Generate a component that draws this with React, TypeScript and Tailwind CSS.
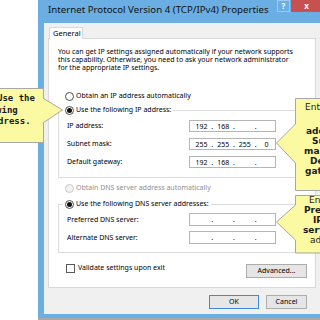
import React from "react";

function Radio({ checked, disabled }: { checked?: boolean; disabled?: boolean }) {
  return (
    <span
      className={
        disabled
          ? "inline-flex w-[9px] h-[9px] shrink-0 rounded-full border border-[#c9c9c9] bg-[#f2f2f2] items-center justify-center"
          : "inline-flex w-[9px] h-[9px] shrink-0 rounded-full border border-[#4d4d4d] bg-white items-center justify-center"
      }
    >
      {checked && <span className="w-[5px] h-[5px] rounded-full bg-[#111]" />}
    </span>
  );
}

function IpField({ v }: { v: string[] }) {
  return (
    <div className="w-[87px] h-full border border-[#b5b5b5] bg-white flex items-center pl-[3px] text-[7px] leading-none text-black">
      {v.map((s, i) => (
        <React.Fragment key={i}>
          <span className="w-[17px] text-center">{s}</span>
          {i < 3 && <span className="w-[5px] text-center">.</span>}
        </React.Fragment>
      ))}
    </div>
  );
}

function Row({ label, v, h }: { label: string; v: string[]; h: string }) {
  return (
    <div className={`flex items-center ${h}`}>
      <span className="w-[130px] pl-[8px]">{label}</span>
      <IpField v={v} />
    </div>
  );
}

export default function App() {
  return (
    <div className="relative w-[320px] h-[320px] overflow-hidden bg-white font-['Noto_Sans',sans-serif] text-black">
      {/* window */}
      <div className="ml-[38px] w-[292px] h-[318px] bg-[#6aaee4] flex flex-col">
        {/* title bar */}
        <div className="h-[23px] flex items-start shrink-0">
          <div className="flex-1 pl-[10px] pt-[3px] text-[9.7px] leading-[13px] text-[#111] whitespace-nowrap">
            Internet Protocol Version 4 (TCP/IPv4) Properties
          </div>
          <div className="w-[13px] h-[12px] mr-[1px] border border-[#9cc9ee] bg-[#6aaee4] flex items-center justify-center text-[8px] font-bold text-white leading-none">
            ?
          </div>
          <div className="w-[31px] h-[12px] mr-[8px] bg-[#c75050] flex items-center justify-center text-[8px] font-bold text-white leading-none">
            x
          </div>
        </div>
        {/* client */}
        <div className="mx-[6px] mb-[4px] flex-1 bg-[#f0f0f0] flex flex-col text-[7px] leading-[8px]">
          <div className="pt-[4px] pl-[5px] flex">
            <div className="relative z-10 w-[34px] h-[12px] -mb-[1px] bg-white border border-b-0 border-[#d9d9d9] pl-[3px] text-[7.5px] leading-[11px]">
              General
            </div>
          </div>
          <div className="ml-[4px] w-[268px] h-[250px] bg-white border border-[#d9d9d9] pl-[9px] pr-[8px] flex flex-col">
            <p className="pt-[9px] whitespace-nowrap">
              You can get IP settings assigned automatically if your network supports
              <br />
              this capability. Otherwise, you need to ask your network administrator
              <br />
              for the appropriate IP settings.
            </p>
            <div className="mt-[19px] h-[10px] flex items-center gap-[2px] pl-[7px]">
              <Radio />
              <span>Obtain an IP address automatically</span>
            </div>
            {/* IP group */}
            <div className="mt-[9px] h-[68px] border border-[#dcdcdc] flex flex-col">
              <div className="-mt-[6px] ml-[4px] h-[10px] self-start px-[2px] bg-white flex items-center gap-[2px]">
                <Radio checked />
                <span>Use the following IP address:</span>
              </div>
              <div className="mt-[5px] flex flex-col gap-[6px]">
                <Row label="IP address:" v={["192", "168", "", ""]} h="h-[12px]" />
                <Row label="Subnet mask:" v={["255", "255", "255", "0"]} h="h-[12px]" />
                <Row label="Default gateway:" v={["192", "168", "", ""]} h="h-[12px]" />
              </div>
            </div>
            <div className="mt-[5px] h-[10px] flex items-center gap-[2px] pl-[7px] text-[#8f8f8f]">
              <Radio disabled />
              <span>Obtain DNS server address automatically</span>
            </div>
            {/* DNS group */}
            <div className="mt-[11px] h-[49px] border border-[#dcdcdc] flex flex-col">
              <div className="-mt-[6px] ml-[4px] h-[10px] self-start px-[2px] bg-white flex items-center gap-[2px]">
                <Radio checked />
                <span>Use the following DNS server addresses:</span>
              </div>
              <div className="mt-[4px] flex flex-col gap-[5px]">
                <Row label="Preferred DNS server:" v={["", "", "", ""]} h="h-[13px]" />
                <Row label="Alternate DNS server:" v={["", "", "", ""]} h="h-[13px]" />
              </div>
            </div>
            <div className="mt-[10px] flex items-start justify-between">
              <div className="h-[10px] flex items-center gap-[3px] pl-[8px]">
                <span className="w-[9px] h-[9px] border border-[#5a5a5a] bg-white" />
                <span>Validate settings upon exit</span>
              </div>
              <div className="mt-[1px] w-[61px] h-[14px] border border-[#acacac] bg-[#e5e5e5] flex items-center justify-center">
                Advanced...
              </div>
            </div>
          </div>
          <div className="mt-[7px] flex justify-end gap-[7px] pr-[17px]">
            <div className="w-[50px] h-[14px] border border-[#3c8ad8] bg-[#e6e6e6] flex items-center justify-center">
              OK
            </div>
            <div className="w-[41px] h-[14px] border border-[#acacac] bg-[#e5e5e5] flex items-center justify-center">
              Cancel
            </div>
          </div>
        </div>
      </div>
      <div className="ml-[38px] h-[2px] bg-[#a9a9a9]" />

      {/* left callout */}
      <div className="absolute left-[-12px] top-[88px] w-[80px] h-[56px]">
        <svg className="absolute left-0 top-0" width="80" height="56" viewBox="0 0 80 56">
          <path
            d="M0.5 0.5 H55.5 V10.5 L74.5 22 L55.5 34.5 V54.5 H0.5 Z"
            fill="#fbfaa2"
            stroke="#a7a7a7"
            strokeWidth="1"
          />
        </svg>
        <div className="relative pt-[5px] font-['DejaVu_Sans_Mono',monospace] font-bold text-[9px] leading-[11.5px] text-[#1a1a1a] whitespace-nowrap">
          <div className="ml-[9px]">Use the</div>
          <div className="ml-[-19px]">following</div>
          <div className="ml-[-17px]">IP address.</div>
        </div>
      </div>

      {/* right callout 1 */}
      <div className="absolute left-[275px] top-[98px] w-[70px] h-[93px]">
        <svg className="absolute left-0 top-0" width="70" height="93" viewBox="0 0 70 93">
          <path
            d="M20.5 0.5 H69 V92.5 H20.5 V65 L1.5 45 L20.5 26 Z"
            fill="#fbfaa2"
            stroke="#a7a7a7"
            strokeWidth="1"
          />
        </svg>
        <div className="relative pt-[4px] font-['DejaVu_Sans',sans-serif] text-[9px] leading-[10px] text-[#1a1a1a] whitespace-nowrap">
          <div className="ml-[30px]">Enter the</div>
          <div className="ml-[50px] font-bold">IP</div>
          <div className="ml-[31px] mt-[4px] font-bold">address,</div>
          <div className="ml-[37px] font-bold">Subnet</div>
          <div className="ml-[29px] font-bold">mask, and</div>
          <div className="ml-[35px] font-bold">Default</div>
          <div className="ml-[30px] font-bold">gateway.</div>
        </div>
      </div>

      {/* right callout 2 */}
      <div className="absolute left-[275px] top-[195px] w-[70px] h-[59px]">
        <svg className="absolute left-0 top-0" width="70" height="59" viewBox="0 0 70 59">
          <path
            d="M20.5 0.5 H69 V58 H20.5 V45 L1.5 27 L20.5 10 Z"
            fill="#fbfaa2"
            stroke="#a7a7a7"
            strokeWidth="1"
          />
        </svg>
        <div className="relative pt-[0px] font-['DejaVu_Sans',sans-serif] text-[9px] leading-[10px] text-[#1a1a1a] whitespace-nowrap">
          <div className="ml-[34px]">Enter the</div>
          <div className="ml-[29px] font-bold">Preferred</div>
          <div className="ml-[38px] font-bold">IP</div>
          <div className="ml-[28px] font-bold">server</div>
          <div className="ml-[35px]">address.</div>
        </div>
      </div>
    </div>
  );
}
